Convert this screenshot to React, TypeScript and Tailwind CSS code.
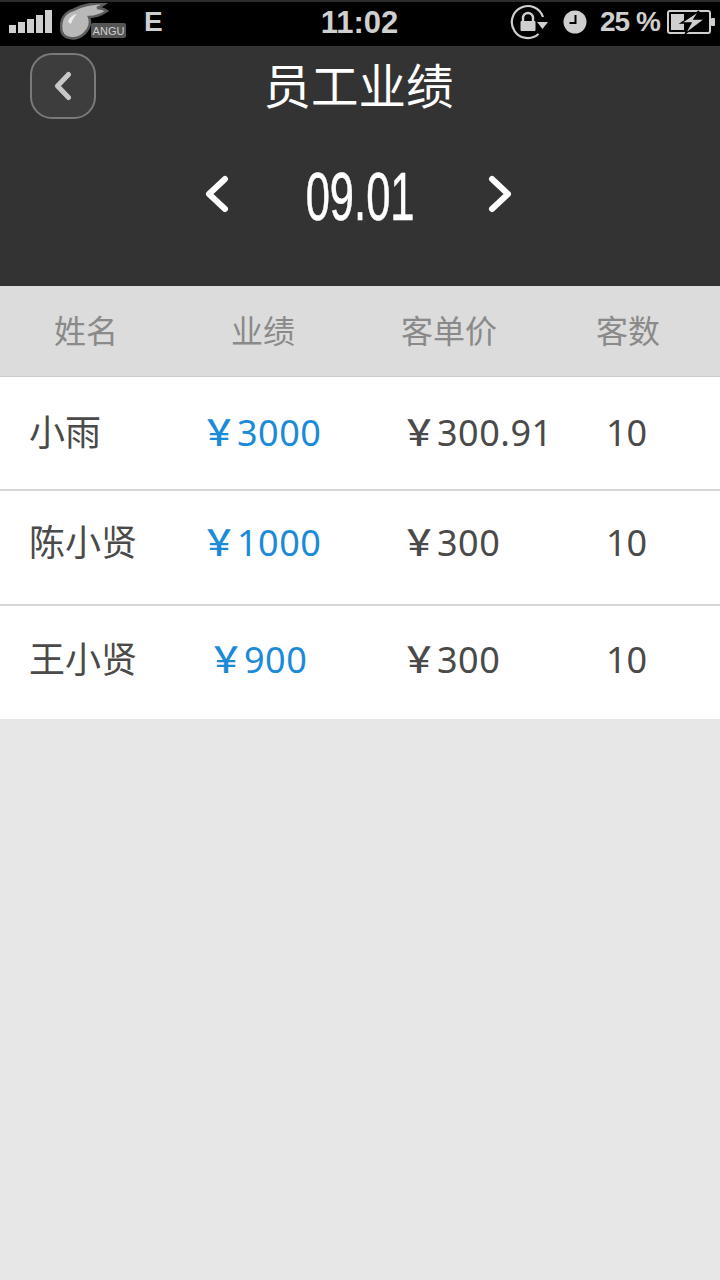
import React from 'react';

const CJK = "font-['Noto_Sans','Noto_Sans_CJK_SC',sans-serif]";

const rows = [
  { name: '小雨', total: '3000', price: '300.91', count: '10', box: 'h-[114px]', offset: 'pl-[29px]' },
  { name: '陈小贤', total: '1000', price: '300', count: '10', box: 'h-[115px] pb-[9px]', offset: 'pl-[29px]' },
  { name: '王小贤', total: '900', price: '300', count: '10', box: 'h-[113px] pb-[5px]', offset: 'pl-[36px]' },
];

const SignalBars = () => (
  <svg width="44" height="24" viewBox="0 0 44 24" fill="#cfcfcf">
    <rect x="0" y="15" width="7" height="8" />
    <rect x="9" y="12" width="7" height="11" />
    <rect x="18" y="9" width="7" height="14" />
    <rect x="27" y="5" width="7" height="18" />
    <rect x="36" y="0" width="7" height="23" />
  </svg>
);

const RabbitLogo = () => (
  <div className="relative w-[66px] h-[38px] ml-[7px]">
    <svg width="50" height="38" viewBox="0 0 50 38">
      <path d="M1 24C1 15 6 9 13 7C22 2 34 0 46 0C42 3 40 4 37 5C41 5 44 6 47 8C41 12 35 14 29 14C31 19 30 25 24 31C16 38 1 37 1 24Z" fill="#b8b8b8" stroke="#5c5c5c" strokeWidth="2.6" />
      <path d="M8 19C9 15 12 12 17 11C14 14 12 17 11 21Z" fill="#ececec" />
    </svg>
    <span className="absolute right-0 bottom-[3px] h-[15px] w-[35px] bg-[#555] rounded-[2px] text-[#d0d0d0] text-[11px] leading-[16px] text-center font-['Liberation_Sans',sans-serif]">
      ANGU
    </span>
  </div>
);

const RotationLock = () => (
  <svg width="40" height="36" viewBox="0 0 40 36" fill="none">
    <path d="M28.5 30A16 16 0 1 1 33 13" stroke="#cfcfcf" strokeWidth="2.2" />
    <path d="M27 18H38L32.5 25Z" fill="#cfcfcf" />
    <path d="M13 17V14A5 5 0 0 1 23 14V17" stroke="#cfcfcf" strokeWidth="2.4" />
    <rect x="10.5" y="17" width="15" height="10" rx="1" fill="#cfcfcf" />
  </svg>
);

const ClockIcon = () => (
  <svg width="24" height="24" viewBox="0 0 24 24">
    <circle cx="12" cy="12" r="11.5" fill="#cfcfcf" />
    <path d="M12.5 5V13H6.5" fill="none" stroke="#000" strokeWidth="2" />
  </svg>
);

const BatteryIcon = () => (
  <svg width="48" height="26" viewBox="0 0 48 26" fill="none">
    <rect x="1" y="2" width="42" height="22" rx="2" stroke="#cfcfcf" strokeWidth="2" />
    <rect x="44" y="9" width="4" height="8" rx="1" fill="#cfcfcf" />
    <rect x="4" y="5" width="13" height="16" fill="#cfcfcf" />
    <path d="M14 14L32 2L27 10H38L18 25L24 14Z" fill="#cfcfcf" stroke="#000" strokeWidth="1.4" />
  </svg>
);

const Chevron = ({ dir, w, h, color, width }: { dir: 'left' | 'right'; w: number; h: number; color: string; width: number }) => (
  <svg width={w} height={h} viewBox={`0 0 ${w} ${h}`} fill="none">
    <path
      d={
        dir === 'left'
          ? `M${w - width / 2 - 1} ${width / 2 + 1}L${width / 2 + 1} ${h / 2}L${w - width / 2 - 1} ${h - width / 2 - 1}`
          : `M${width / 2 + 1} ${width / 2 + 1}L${w - width / 2 - 1} ${h / 2}L${width / 2 + 1} ${h - width / 2 - 1}`
      }
      stroke={color}
      strokeWidth={width}
      strokeLinecap="round"
      strokeLinejoin="round"
    />
  </svg>
);

// the yen sign is the full-width glyph, it carries its own side space
const Money = ({ value }: { value: string }) => (
  <span className="flex items-center leading-none">
    <span className="w-[36px] -ml-[6px] -translate-y-[3px] font-medium font-['Noto_Sans_CJK_SC',sans-serif]">￥</span>
    <span className="tracking-[0.5px]">{value}</span>
  </span>
);

export default function App() {
  return (
    <div className={`w-[720px] h-[1280px] bg-[#e7e7e7] overflow-hidden ${CJK}`}>
      {/* status bar */}
      <div className="h-[46px] bg-black border-t-2 border-[#2c2c2c] pb-[4px] flex items-center text-[#cfcfcf] font-['Liberation_Sans',sans-serif]">
        <div className="w-[320px] flex items-center pl-[9px]">
          <SignalBars />
          <RabbitLogo />
          <span className="ml-[18px] text-[28px] leading-none font-bold">E</span>
        </div>
        <span className="w-[79px] text-[31px] leading-none font-bold text-center">11:02</span>
        <div className="flex-1 flex items-center pl-[111px]">
          <RotationLock />
          <span className="ml-[13px]"><ClockIcon /></span>
          <span className="ml-[13px] text-[28px] tracking-[-1px] leading-none font-bold whitespace-nowrap">25 %</span>
          <span className="ml-[7px]"><BatteryIcon /></span>
        </div>
      </div>

      {/* header */}
      <div className="h-[240px] bg-[#333333] flex flex-col">
        <div className="grid grid-cols-[1fr_auto_1fr] items-start pt-[7px] h-[105px]">
          <div className="pl-[30px]">
            <button className="w-[66px] h-[66px] rounded-[22px] border-2 border-[#7a7a7a] bg-[#3d3d3d] flex items-center justify-center">
              <Chevron dir="left" w={18} h={30} color="#c8c8c8" width={5} />
            </button>
          </div>
          <h1 className="text-[47.5px] leading-[66px] pr-[3px] text-white whitespace-nowrap font-normal">员工业绩</h1>
          <div />
        </div>
        <div className="flex items-center justify-center h-[86px] pr-[3px]">
          <Chevron dir="left" w={24} h={38} color="#ffffff" width={6} />
          <span className="w-[259px] pt-[4px] pl-[3px] text-center text-white text-[68px] leading-none font-['Liberation_Sans',sans-serif]">
            <span className="inline-block scale-x-[0.64] [-webkit-text-stroke:0.6px_white]">09.01</span>
          </span>
          <Chevron dir="right" w={24} h={38} color="#ffffff" width={6} />
        </div>
      </div>

      {/* table head */}
      <div className="h-[91px] bg-[#dcdcdc] border-b border-[#cccccc] grid grid-cols-[172px_182px_190px_1fr] items-center text-[32px] text-[#8a8a8a] text-center">
        <span>姓名</span>
        <span>业绩</span>
        <span>客单价</span>
        <span className="pr-[8px]">客数</span>
      </div>

      {/* rows */}
      <div className="bg-white">
        {rows.map((r, i) => (
          <div key={r.name} className={`pl-[30px] ${i < rows.length - 1 ? 'border-b-2 border-[#d6d6d6]' : ''} ${r.box}`}>
            <div className="h-full grid grid-cols-[148px_182px_247px_1fr] items-center text-[36px] text-[#4a4a4a]">
              <span className="-ml-[1px] whitespace-nowrap">{r.name}</span>
              <span className={`${r.offset} text-[#1a8ad9] whitespace-nowrap`}>
                <Money value={r.total} />
              </span>
              <span className="pl-[47px] whitespace-nowrap">
                <Money value={r.price} />
              </span>
              <span className="-ml-[1px]">{r.count}</span>
            </div>
          </div>
        ))}
      </div>
    </div>
  );
}
